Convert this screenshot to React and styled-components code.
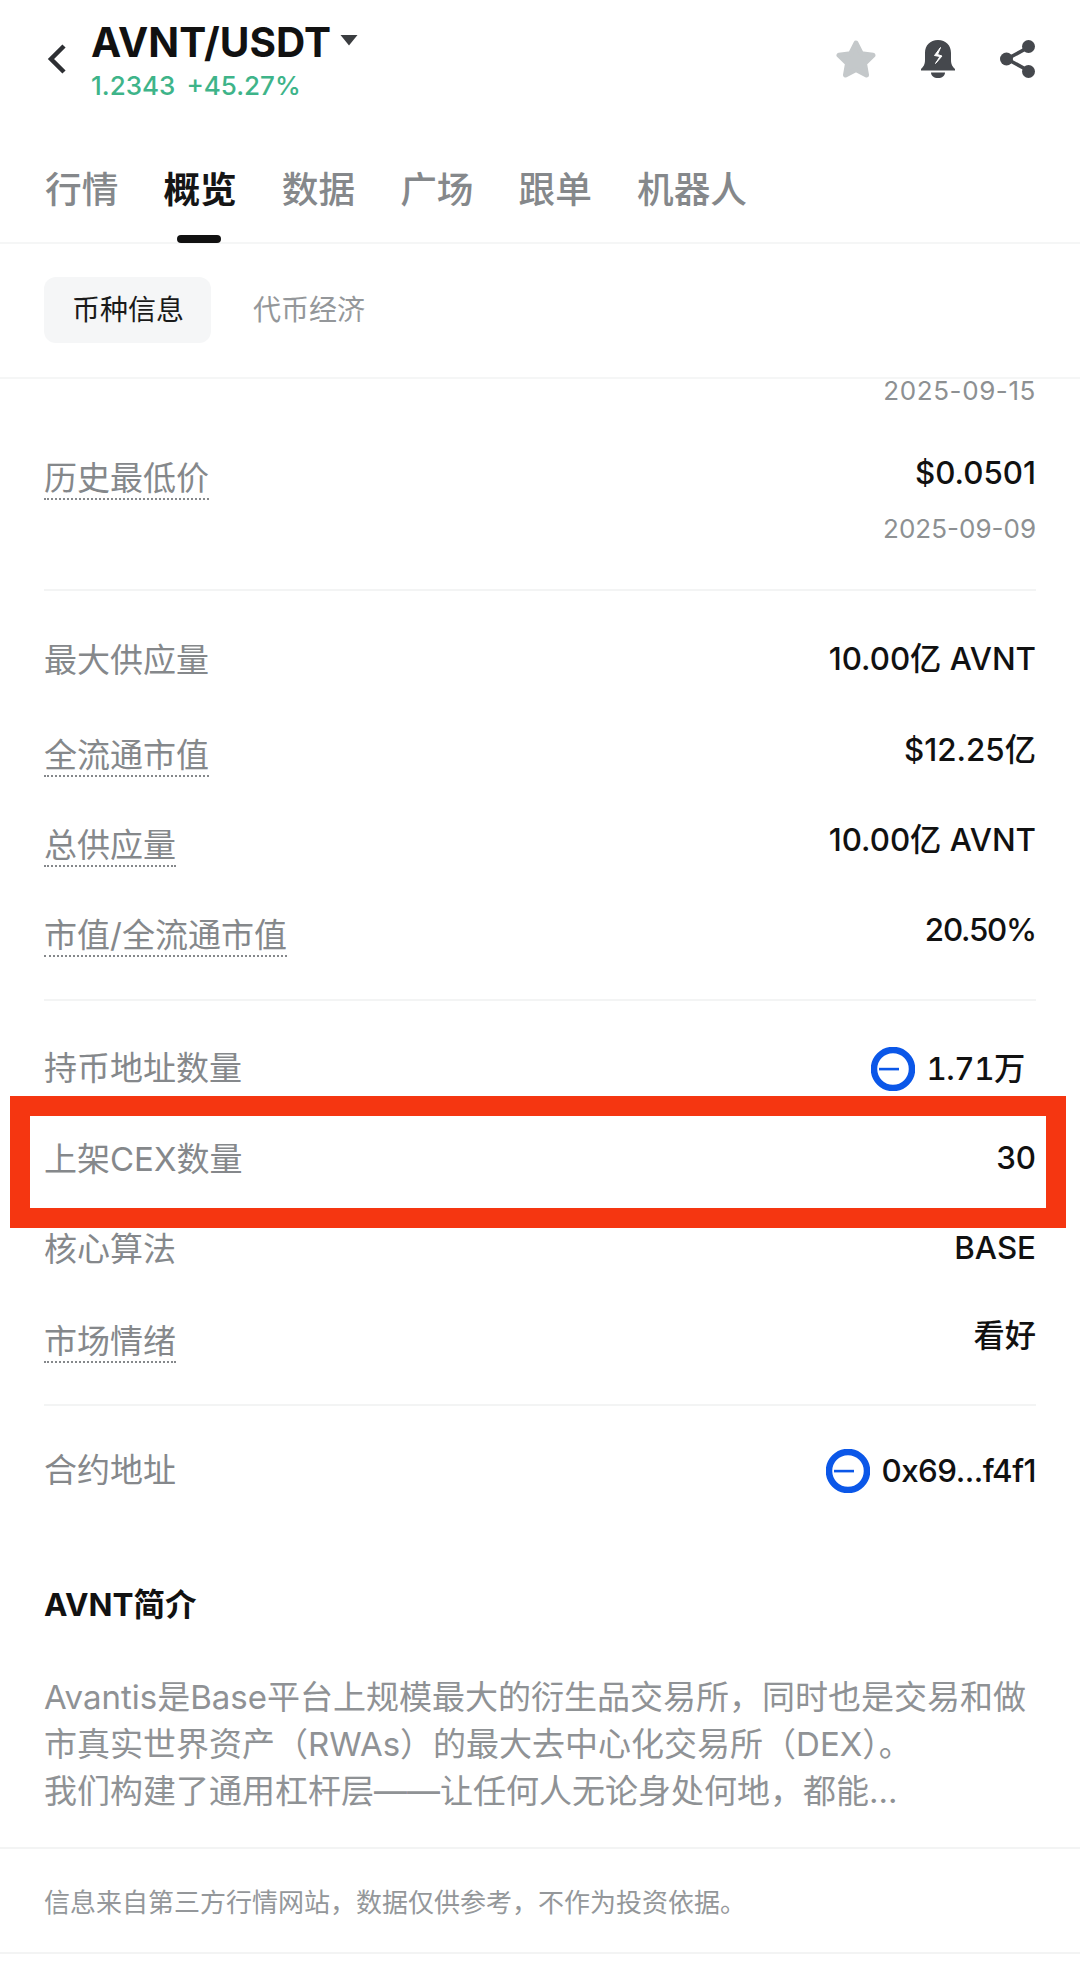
import React from 'react';
import styled, { createGlobalStyle } from 'styled-components';

const sans = `Inter, "Liberation Sans", "Noto Sans CJK SC", sans-serif`;

const GlobalStyle = createGlobalStyle`
    html, body {
        margin: 0;
        padding: 0;
        background: #fff;
    }
    * {
        box-sizing: border-box;
    }
`
const Page = styled.div`
    width: 1080px;
    height: 1963px;
    overflow: hidden;
    background: #fff;
    font-family: ${sans};
`
const TopBar = styled.header`
    height: 110px;
    padding: 20px 44px 0 47px;
    display: flex;
    align-items: flex-start;
`
const BackButton = styled.div`
    width: 44px;
    margin-top: 23px;
    display: flex;
`
const Pair = styled.div`
    display: flex;
    flex-direction: column;
`
const PairName = styled.div`
    display: flex;
    align-items: center;
    font-size: 40.5px;
    line-height: 46px;
    font-weight: 700;
    color: #111;
`
const Caret = styled.svg`
    width: 18px;
    height: 12px;
    margin: -6px 0 0 9px;
`
const Ticker = styled.div`
    display: flex;
    gap: 11px;
    margin-top: 5px;
    font-size: 26px;
    line-height: 30px;
    font-weight: 500;
    color: #3eb489;
`
const Actions = styled.div`
    margin-left: auto;
    padding-top: 20px;
    display: flex;
    align-items: center;
    gap: 45px;
`
const MainTabs = styled.nav`
    height: 134px;
    padding: 55px 0 0 45px;
    display: flex;
    gap: 45px;
    border-bottom: 2px solid #f5f6f6;
`
const MainTab = styled.div`
    position: relative;
    height: 50px;
    font-size: 36.7px;
    line-height: 50px;
    font-weight: ${({ $active }) => ($active ? 700 : 500)};
    color: ${({ $active }) => ($active ? '#151515' : '#85888b')};

    ${({ $active }) => $active && `
        &::after {
            content: '';
            position: absolute;
            left: 14px;
            right: 16px;
            bottom: -28px;
            height: 8px;
            border-radius: 4px;
            background: #111;
        }
    `}
`
const SubTabs = styled.div`
    height: 135px;
    padding: 33px 0 0 44px;
    display: flex;
    gap: 14px;
    border-bottom: 2px solid #f5f6f6;
`
const SubTab = styled.div`
    width: ${({ $active }) => ($active ? '167px' : 'auto')};
    height: 66px;
    padding: 0 28px;
    border-radius: 12px;
    font-size: 28px;
    line-height: 66px;
    white-space: nowrap;
    background: ${({ $active }) => ($active ? '#f5f6f7' : 'transparent')};
    color: ${({ $active }) => ($active ? '#1a1a1a' : '#94979a')};
`
const Content = styled.main`
    padding: 0 44px;
`
const DateLine = styled.div`
    text-align: right;
    font-size: 26px;
    line-height: 24px;
    letter-spacing: ${({ $spacing }) => $spacing || 0}px;
    color: #8d9092;
`
const Group = styled.section`
    padding: ${({ $top }) => $top || 0}px 0 ${({ $bottom }) => $bottom || 0}px;
    border-bottom: ${({ $plain }) => ($plain ? 'none' : '2px solid #f3f4f4')};
`
const Row = styled.div`
    position: relative;
    height: ${({ $height }) => $height || 90}px;
    margin-top: ${({ $offset }) => $offset || 0}px;
    display: flex;
    justify-content: space-between;
    align-items: flex-start;
`
const Label = styled.span`
    font-size: 33px;
    line-height: ${({ $dotted }) => ($dotted ? 40 : 42)}px;
    padding-top: ${({ $dotted }) => ($dotted ? 5 : 0)}px;
    color: #85888b;
    border-bottom: ${({ $dotted }) => ($dotted ? '2px dotted #85888b' : 'none')};
`
const Value = styled.span`
    display: flex;
    align-items: center;
    gap: 11px;
    font-size: 31.3px;
    line-height: 41px;
    font-weight: 500;
    color: #111;
    padding-right: ${({ $inset }) => $inset || 0}px;
    letter-spacing: ${({ $spacing }) => $spacing || 0}px;
    font-variant-numeric: ${({ $tabular }) => ($tabular ? 'tabular-nums' : 'normal')};
`
const Highlight = styled.div`
    position: absolute;
    left: -34px;
    right: -30px;
    top: -42px;
    height: 132px;
    border: 20px solid #f53611;
    pointer-events: none;
`
const Intro = styled.section`
    padding: 0 44px;
`
const IntroTitle = styled.h2`
    margin: 0;
    font-size: 31.5px;
    line-height: 42px;
    font-weight: 700;
    color: #111;
`
const IntroText = styled.p`
    margin: 48px 0 0;
    font-size: 33px;
    line-height: 47px;
    white-space: nowrap;
    color: #8f9295;
`
const Disclaimer = styled.footer`
    height: 107px;
    margin-top: 32px;
    padding-top: 36px;
    border-top: 2px solid #f3f4f4;
    border-bottom: 2px solid #f3f4f4;
    font-size: 26px;
    line-height: 36px;
    color: #94979a;
    text-indent: 44px;
`

const ChainIcon = () => (
    <svg width="44" height="44" viewBox="0 0 44 44">
        <circle cx="22" cy="22" r="19" fill="none" stroke="#0b57e8" strokeWidth="6.5" />
        <rect x="8" y="20.8" width="20" height="2.6" fill="#0b57e8" />
    </svg>
)

function App() {
    return (
        <Page>
            <GlobalStyle />
            <TopBar>
                <BackButton>
                    <svg width="20" height="32" viewBox="0 0 20 32">
                        <path d="M17 3 L4 16 L17 29" fill="none" stroke="#2d2f33" strokeWidth="4.5" />
                    </svg>
                </BackButton>
                <Pair>
                    <PairName>
                        AVNT/USDT
                        <Caret viewBox="0 0 18 12">
                            <path d="M0.5 1 H17.5 L9 11.5 Z" fill="#3b3d40" />
                        </Caret>
                    </PairName>
                    <Ticker>
                        <span>1.2343</span>
                        <span>+45.27%</span>
                    </Ticker>
                </Pair>
                <Actions>
                    <svg width="40" height="38" viewBox="0 0 40 38">
                        <path
                            d="M20 3 L25.3 13.6 L37 15.3 L28.5 23.5 L30.5 35 L20 29.6 L9.5 35 L11.5 23.5 L3 15.3 L14.7 13.6 Z"
                            fill="#c4c8ca"
                            stroke="#c4c8ca"
                            strokeWidth="5"
                            strokeLinejoin="round"
                        />
                    </svg>
                    <svg width="34" height="38" viewBox="0 0 34 38">
                        <path
                            d="M17 0 C9 0 4 5.5 4 13 V20 C4 25 2 27 0 29 V30.5 H34 V29 C32 27 30 25 30 20 V13 C30 5.5 25 0 17 0 Z"
                            fill="#45484d"
                        />
                        <path d="M10 32.5 H24 C24 36 21 38 17 38 C13 38 10 36 10 32.5 Z" fill="#45484d" />
                        <path d="M19.5 7.5 L13.5 15.5 L19 16.5 L14.5 23.5 L21 16 L16.5 14.5 Z" fill="#fff" stroke="#fff" strokeWidth="1" />
                    </svg>
                    <svg width="36" height="38" viewBox="0 0 36 38">
                        <path d="M29 7 L7 19 L29 31" fill="none" stroke="#45484d" strokeWidth="3.6" />
                        <circle cx="28.5" cy="6.5" r="6.5" fill="#45484d" />
                        <circle cx="6.5" cy="19" r="6.5" fill="#45484d" />
                        <circle cx="28.5" cy="31.5" r="6.5" fill="#45484d" />
                    </svg>
                </Actions>
            </TopBar>
            <MainTabs>
                <MainTab>行情</MainTab>
                <MainTab $active>概览</MainTab>
                <MainTab>数据</MainTab>
                <MainTab>广场</MainTab>
                <MainTab>跟单</MainTab>
                <MainTab>机器人</MainTab>
            </MainTabs>
            <SubTabs>
                <SubTab $active>币种信息</SubTab>
                <SubTab>代币经济</SubTab>
            </SubTabs>
            <Content>
                <Group $top={0} $bottom={48}>
                    <DateLine $spacing={0.6}>2025-09-15</DateLine>
                    <Row $height={64} $offset={50}>
                        <Label $dotted>历史最低价</Label>
                        <Value>$0.0501</Value>
                    </Row>
                    <DateLine>2025-09-09</DateLine>
                </Group>
                <Group $top={48} $bottom={27}>
                    <Row $height={91}>
                        <Label>最大供应量</Label>
                        <Value>10.00亿 AVNT</Value>
                    </Row>
                    <Row $height={90}>
                        <Label $dotted>全流通市值</Label>
                        <Value>$12.25亿</Value>
                    </Row>
                    <Row $height={90}>
                        <Label $dotted>总供应量</Label>
                        <Value>10.00亿 AVNT</Value>
                    </Row>
                    <Row $height={62}>
                        <Label $dotted>市值/全流通市值</Label>
                        <Value $spacing={-1.2}>20.50%</Value>
                    </Row>
                </Group>
                <Group $top={46} $bottom={22}>
                    <Row $height={91}>
                        <Label>持币地址数量</Label>
                        <Value $inset={11} $tabular $spacing={-0.4}>
                            <ChainIcon />
                            1.71万
                        </Value>
                    </Row>
                    <Row $height={90}>
                        <Label>上架CEX数量</Label>
                        <Value>30</Value>
                        <Highlight />
                    </Row>
                    <Row $height={88}>
                        <Label>核心算法</Label>
                        <Value>BASE</Value>
                    </Row>
                    <Row $height={66}>
                        <Label $dotted>市场情绪</Label>
                        <Value>看好</Value>
                    </Row>
                </Group>
                <Group $plain $top={43} $bottom={93}>
                    <Row $height={42}>
                        <Label>合约地址</Label>
                        <Value $spacing={-0.5}>
                            <ChainIcon />
                            0x69...f4f1
                        </Value>
                    </Row>
                </Group>
            </Content>
            <Intro>
                <IntroTitle>AVNT简介</IntroTitle>
                <IntroText>
                    Avantis是Base平台上规模最大的衍生品交易所，同时也是交易和做
                    <br />
                    市真实世界资产（RWAs）的最大去中心化交易所（DEX）。
                    <br />
                    我们构建了通用杠杆层——让任何人无论身处何地，都能...
                </IntroText>
            </Intro>
            <Disclaimer>信息来自第三方行情网站，数据仅供参考，不作为投资依据。</Disclaimer>
        </Page>
    );
}

export default App
